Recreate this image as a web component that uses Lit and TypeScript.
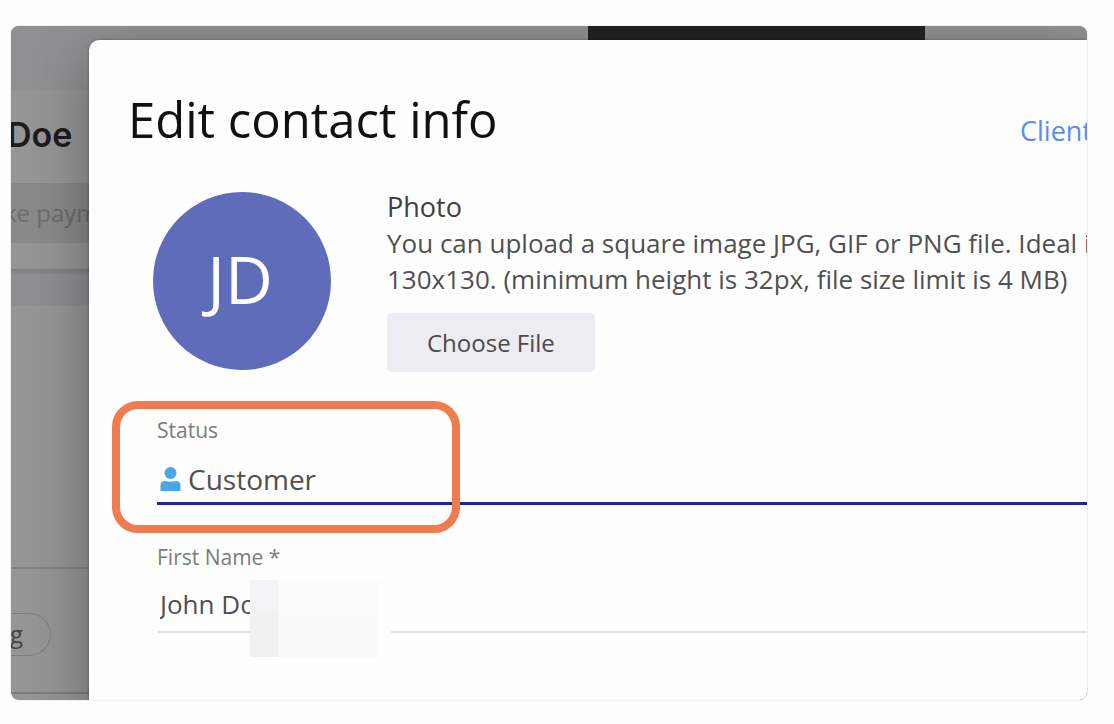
import { LitElement, html, css } from "lit";
import { customElement } from "lit/decorators.js";

/* The contact page that sits dimmed behind the dialog. */
@customElement("contact-backdrop")
class ContactBackdrop extends LitElement {
  static styles = css`
    :host {
      display: flex;
      flex-direction: column;
      min-width: 0;
      overflow: hidden;
      background: #959595;
      font-family: "Open Sans", "Noto Sans", sans-serif;
      white-space: nowrap;
    }
    .topbar {
      display: grid;
      grid-template-columns: 577fr 337fr 162fr;
      height: 64px;
      flex: none;
      background: #8f9092;
    }
    .tab {
      grid-column: 2;
      background: #222224;
    }
    .card {
      flex: none;
    }
    .name {
      margin: 0;
      padding-top: 18px;
      height: 75px;
      font-family: "Inter", sans-serif;
      font-size: 34px;
      line-height: 54px;
      font-weight: 600;
      color: #1c1c1c;
      text-indent: -4px;
    }
    .payment {
      display: block;
      width: 100%;
      height: 60px;
      border: 0;
      padding: 0;
      background: #898989;
      color: #6c6c6c;
      font: 24px/60px "Open Sans", sans-serif;
      text-align: left;
      text-indent: -7px;
    }
    .card-end {
      height: 26px;
    }
    .band {
      flex: none;
      height: 37px;
      background: linear-gradient(#7c7d7f, #8c8e91 6px);
    }
    .list {
      flex: none;
      height: 261px;
      border-bottom: 2px solid #808084;
    }
    .tags {
      flex: none;
      height: 125px;
      box-sizing: border-box;
      padding-top: 44px;
      border-bottom: 2px solid #7b7b7f;
    }
    .pill {
      box-sizing: border-box;
      width: 40px;
      height: 43px;
      border: 1px solid #7e7e7e;
      border-left: 0;
      border-radius: 0 22px 22px 0;
      font-size: 24px;
      line-height: 40px;
      color: #444;
      text-indent: -1px;
    }
  `;

  render() {
    return html`
      <div class="topbar"><div class="tab"></div></div>
      <div class="card">
        <h2 class="name">Doe</h2>
        <button class="payment" type="button">ke paym</button>
        <div class="card-end"></div>
      </div>
      <div class="band"></div>
      <div class="list"></div>
      <div class="tags"><div class="pill">g</div></div>
    `;
  }
}

@customElement("edit-contact-dialog")
class EditContactDialog extends LitElement {
  static styles = css`
    :host {
      display: block;
      min-width: 0;
      box-sizing: border-box;
      padding: 47px 0 40px 39px;
      border-radius: 10px 0 0 0;
      background: #fefefe;
      box-shadow:
        0 0 3px rgba(0, 0, 0, 0.35),
        0 30px 48px 4px rgba(0, 0, 0, 0.18),
        0 12px 56px 10px rgba(0, 0, 0, 0.1);
      font-family: "Open Sans", "Noto Sans", sans-serif;
      color: #505050;
      white-space: nowrap;
    }
    .header {
      display: flex;
      align-items: center;
      justify-content: space-between;
    }
    h1 {
      margin: 0;
      font-size: 49px;
      line-height: 64px;
      font-weight: 500;
      color: #111;
    }
    .client {
      width: 67px;
      margin-top: 24px;
      font-size: 27px;
      line-height: 36px;
      color: #5b8def;
      text-decoration: none;
    }
    .photo {
      display: flex;
      align-items: flex-start;
      gap: 56px;
      margin-top: 38px;
      padding-left: 25px;
    }
    .avatar {
      flex: none;
      box-sizing: border-box;
      width: 178px;
      height: 178px;
      margin-top: 3px;
      padding-right: 4px;
      border-radius: 50%;
      background: #5f6cba;
      color: #fff;
      font-size: 66px;
      line-height: 172px;
      font-weight: 500;
      text-align: center;
    }
    h2 {
      margin: 0;
      font-size: 27px;
      line-height: 36px;
      font-weight: 500;
      color: #404040;
    }
    p {
      margin: 0 0 16px;
      font-size: 26px;
      line-height: 36px;
    }
    .choose {
      display: block;
      height: 59px;
      padding: 0 40px;
      border: 0;
      border-radius: 5px;
      background: #edecf3;
      color: #4a4a4a;
      font: 24px/59px "Open Sans", sans-serif;
    }
    .form {
      display: flex;
      flex-direction: column;
      gap: 37px;
      margin-top: 43px;
      padding-left: 29px;
    }
    .field {
      position: relative;
    }
    label {
      display: block;
      font-size: 21px;
      line-height: 30px;
      color: #7c7c7c;
    }
    .control {
      display: flex;
      align-items: center;
      height: 40px;
      padding: 12px 0 7px 3px;
      border-bottom: 2px solid #e2e2e2;
    }
    .control.active {
      padding: 14px 0 3px 3px;
      border-bottom: 3px solid #1d2796;
    }
    .person {
      flex: none;
      width: 21px;
      height: 24px;
      margin-right: 7px;
    }
    select,
    input {
      appearance: none;
      flex: 1;
      min-width: 0;
      height: 40px;
      margin: 0;
      padding: 0;
      border: 0;
      outline: 0;
      background: none;
      color: #505050;
      font: 26px/40px "Open Sans", sans-serif;
    }
    select {
      font-size: 28px;
    }
    .highlight {
      position: absolute;
      box-sizing: border-box;
      left: -45px;
      top: -14px;
      width: 348px;
      height: 132px;
      border: 8px solid #ef7b4f;
      border-radius: 26px;
      pointer-events: none;
    }
    .redaction {
      position: absolute;
      left: 93px;
      top: 38px;
      display: grid;
      grid-template-columns: 28px 100px 13px;
      grid-template-rows: 31px 46px;
    }
    .a { background: #f4f4f7; }
    .b { background: #fbfbfc; }
    .c { background: #fdfdfd; }
    .d { background: #f1f1f2; }
    .e { background: #fafafb; }
  `;

  render() {
    return html`
      <div class="header">
        <h1>Edit contact info</h1>
        <a class="client" href="#">Client</a>
      </div>
      <div class="photo">
        <div class="avatar">JD</div>
        <div>
          <h2>Photo</h2>
          <p>
            You can upload a square image JPG, GIF or PNG file. Ideal im<br />130x130.
            (minimum height is 32px, file size limit is 4 MB)
          </p>
          <button class="choose" type="button">Choose File</button>
        </div>
      </div>
      <form class="form">
        <div class="field">
          <label for="status">Status</label>
          <div class="control active">
            <svg class="person" viewBox="0 0 21 24" fill="#4ba6e6" aria-hidden="true">
              <circle cx="10.5" cy="6" r="6" />
              <path d="M0.5 24V18.5Q0.5 14 5 14Q10.5 15.4 16 14Q20.5 14 20.5 18.5V24Z" />
            </svg>
            <select id="status"><option>Customer</option></select>
          </div>
          <div class="highlight"></div>
        </div>
        <div class="field">
          <label for="first-name">First Name *</label>
          <div class="control">
            <input id="first-name" type="text" value="John Doe" />
          </div>
          <div class="redaction">
            <i class="a"></i><i class="b"></i><i class="c"></i>
            <i class="d"></i><i class="e"></i><i class="c"></i>
          </div>
        </div>
      </form>
    `;
  }
}

@customElement("app-root")
class AppRoot extends LitElement {
  static styles = css`
    :host {
      display: flex;
      box-sizing: border-box;
      min-height: 100vh;
      padding: 25px 26px 23px 10px;
      background: #fefefe;
    }
    .frame {
      display: grid;
      flex: 1;
      min-width: 0;
      grid-template: minmax(0, 1fr) / minmax(0, 1fr);
      overflow: hidden;
      border: 1px solid #efeff1;
      border-radius: 9px;
    }
    contact-backdrop,
    edit-contact-dialog {
      grid-area: 1 / 1;
    }
    edit-contact-dialog {
      margin: 14px 0 0 78px;
    }
  `;

  render() {
    return html`
      <div class="frame">
        <contact-backdrop></contact-backdrop>
        <edit-contact-dialog></edit-contact-dialog>
      </div>
    `;
  }
}
